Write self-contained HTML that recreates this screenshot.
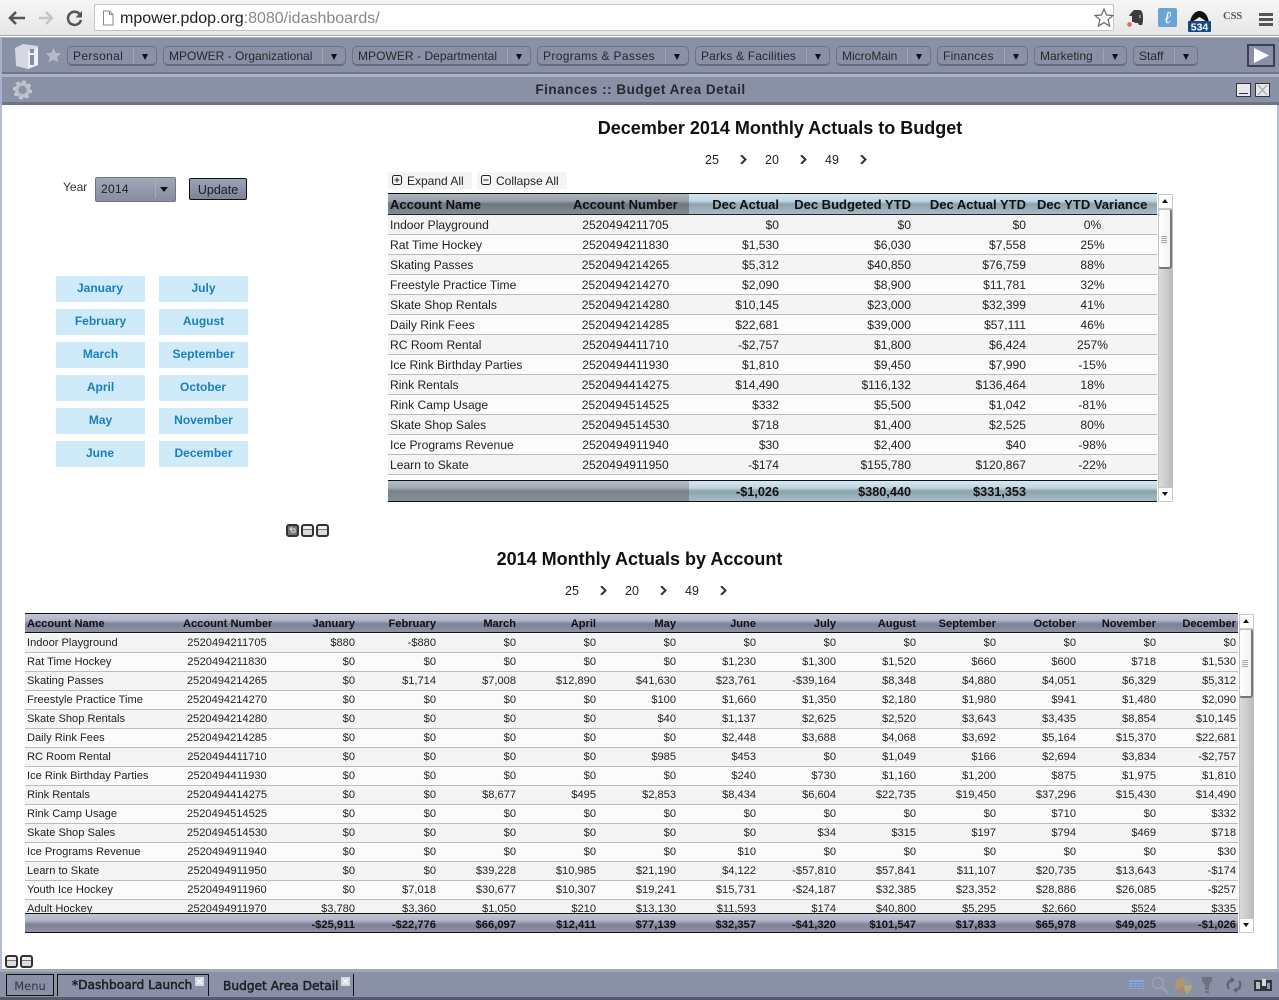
<!DOCTYPE html>
<html><head><meta charset="utf-8"><title>iDashboards</title>
<style>
*{box-sizing:border-box}
html,body{margin:0;padding:0}
body{width:1279px;height:1000px;position:relative;overflow:hidden;background:#fff;font-family:"Liberation Sans",Arial,sans-serif;color:#111}
.a{position:absolute}
.chrome{left:0;top:0;width:1279px;height:36px;background:linear-gradient(#f6f6f6,#e6e6e6);border-bottom:1px solid #a9a9a9}
.url{left:94px;top:4px;width:1020px;height:27px;background:#fff;border:1px solid #c4c4c4;border-radius:2px;font-size:16px;line-height:27px;padding-left:25px;color:#888}
.url b{font-weight:normal;color:#222}
.bar{background:#8a90a6}
.pill{position:absolute;top:46px;height:20px;border:1px solid #6d7284;border-bottom:2px solid #666b7c;border-radius:5px;font-size:12px;line-height:18px;padding-left:5px;color:#26282e;white-space:nowrap}
.pill i{position:absolute;right:22px;top:2px;width:1px;height:14px;background:#a3a8b4}
.pill u{position:absolute;right:8px;top:7px;width:0;height:0;border:3.5px solid transparent;border-top:6px solid #111;border-bottom:0}
.title{left:0;top:81px;width:1281px;text-align:center;font-size:13.5px;font-weight:bold;line-height:17px;color:#26282e;letter-spacing:.5px}
.h1{font-weight:bold;font-size:18px;line-height:22px;text-align:center;color:#111}
.pg{font-size:12.5px;line-height:14px;color:#222}
.ch{width:9px;height:9px}
table{border-collapse:separate;border-spacing:0;table-layout:fixed;position:absolute}
td{padding:0;white-space:nowrap;overflow:hidden;text-align:right}
td:first-child{text-align:left;padding-left:2px}
td:nth-child(2){text-align:center}
.t1{left:388px;top:215px;width:769px;font-size:12.1px;color:#222}
.t1 tr{height:20px}
.t1 td{height:20px;border-bottom:1px solid #bbb;padding-right:2px}
.t1 td:first-child{padding-right:0}
.t1 td:nth-child(2),.t1 td:nth-child(6){text-align:center;padding-right:0}
.t2{left:25px;top:633px;width:1213px;font-size:11.1px;color:#222}
.t2 tr{height:19px}
.t2 td{height:19px;border-bottom:1px solid #bbb;padding-right:2px}
.t2 td:nth-child(2){padding-right:0}
tr:nth-child(odd){background:#f4f4f4}
tr:nth-child(even){background:#fbfbfb}
.th{position:absolute;font-weight:bold;white-space:nowrap;color:#111}
.h1t{top:197px;font-size:13px;line-height:15px}
.h2t{top:618px;font-size:11.1px;line-height:13px}
.ft1{top:485px;font-size:12.7px;line-height:15px;font-weight:bold;color:#111}
.ft2{top:919px;font-size:11.2px;line-height:13px;font-weight:bold;color:#111}
.r{text-align:right}
.mon{position:absolute;width:89px;height:26px;background:#cfebf9;color:#1a7fbe;font-weight:bold;font-size:12px;line-height:24px;text-align:center}
.sb{background:linear-gradient(90deg,#dcdcdc,#bdbdbd);border:1px solid #c0c0c0}
.th-btn{background:#fff;border:1px solid #c8c8c8}
.thumb{background:linear-gradient(90deg,#fff,#f2f2f2);border:1px solid #c2c2c2;border-right:2px solid #777;border-bottom:2px solid #777;border-radius:3px}
.up{width:0;height:0;border:3.5px solid transparent;border-bottom:4px solid #111;border-top:0}
.dn{width:0;height:0;border:3.5px solid transparent;border-top:4px solid #111;border-bottom:0}
.sq{position:absolute;width:13px;height:13px;border:2px solid #333;border-radius:3px;background:linear-gradient(#eee 0,#eee 3px,#777 3px,#777 4px,#dcdcdc 4px)}
.tabt{position:absolute;font:12.2px/17px 'DejaVu Sans',sans-serif;-webkit-text-stroke:.5px #1e2026;color:#1e2026;white-space:nowrap}
</style></head><body>

<div class="a chrome"></div>
<svg class="a" style="left:8px;top:9px" width="75" height="18" viewBox="0 0 75 18"><path d="M2 9h15M8 3 2 9l6 6" fill="none" stroke="#555" stroke-width="2.600"/><path d="M31 9h13M38 3l6 6-6 6" fill="none" stroke="#c4c4c4" stroke-width="2.400"/><path d="M72 5.500A6.600 6.600 0 1 0 73 11" fill="none" stroke="#555" stroke-width="2.500"/><path d="M74 2v6.500h-6.500z" fill="#555"/></svg>
<div class="a url"><b>mpower.pdop.org</b>:8080/idashboards/</div>
<svg class="a" style="left:102px;top:10px" width="12" height="16" viewBox="0 0 12 16"><path d="M1.500 1h6l3.500 3.500V15h-9.500z M7.500 1v3.500H11" fill="#fff" stroke="#888"/></svg>
<svg class="a" style="left:1094px;top:8px" width="20" height="20" viewBox="0 0 20 20"><path d="m10 1 2.600 6 6.400.5-4.900 4.200 1.500 6.300L10 14.600 4.400 18l1.500-6.300L1 7.500 7.400 7z" fill="#fff" stroke="#666" stroke-width="1.200"/></svg>
<svg class="a" style="left:1126px;top:9px" width="18" height="19" viewBox="0 0 18 19"><path d="M5 4 8 1h5c3 0 4 3 4 7s0 6-1 8h-3l-1-2H9l-1-1H6V7H3z" fill="#3c3c3c"/><path d="M13 6h2v3h-2z" fill="#888"/><circle cx="3.500" cy="15.500" r="2.300" fill="#d9705d"/></svg>
<div class="a" style="left:1158px;top:8px;width:19px;height:19px;background:#6aa4d6;border-radius:2px;color:#fff;font:italic 17px/19px 'Liberation Serif',serif;text-align:center">ℓ</div>
<svg class="a" style="left:1187px;top:9px" width="26" height="23" viewBox="0 0 26 23"><path d="M3 14C4 5 9 2 12.500 2S21 5 22 14l-5-3-4.500-3L8 11z" fill="#111"/><rect x="1" y="12" width="23" height="11" rx="1" fill="#134a86"/><text x="12.500" y="21.500" font-family="Liberation Sans" font-size="10.500" font-weight="bold" fill="#fff" text-anchor="middle">534</text></svg>
<div class="a" style="left:1223px;top:10px;font:bold 10.5px/14px 'Liberation Serif',serif;color:#555">CSS</div>
<div class="a" style="left:1259px;top:13px;width:14px;height:3px;background:#555;box-shadow:0 5px 0 #555,0 10px 0 #555"></div>

<div class="a" style="left:0;top:37px;width:1279px;height:68px;background:#a9b1cd"></div>
<div class="a bar" style="left:2px;top:38px;width:1277px;height:36px;border-bottom:2px solid #6e7385"></div>
<div class="a bar" style="left:2px;top:77px;width:1277px;height:28px;border-bottom:3px solid #6e7385"></div>

<svg class="a" style="left:14px;top:42px" width="26" height="28" viewBox="0 0 26 28"><path d="M1 6 9 2l15 2v19l-10 4-12-3z" fill="#d4d8e2"/><path d="M14 9l10-3v17l-10 4z" fill="#eef0f4"/><rect x="16" y="13" width="4" height="10" fill="#868ca1"/><rect x="16" y="7" width="4" height="4" fill="#868ca1"/></svg>
<svg class="a" style="left:45px;top:47px" width="17" height="17" viewBox="0 0 20 20"><path d="m10 1 2.600 6 6.400.5-4.900 4.200 1.500 6.300L10 14.600 4.400 18l1.500-6.300L1 7.500 7.400 7z" fill="#b9bcc8"/></svg>

<div class="pill" style="left:67px;width:90px;letter-spacing:.35px">Personal<i></i><u></u></div>
<div class="pill" style="left:163px;width:183px">MPOWER - Organizational<i></i><u></u></div>
<div class="pill" style="left:352px;width:179px;letter-spacing:.05px">MPOWER - Departmental<i></i><u></u></div>
<div class="pill" style="left:537px;width:152px;letter-spacing:.35px">Programs &amp; Passes<i></i><u></u></div>
<div class="pill" style="left:695px;width:135px;letter-spacing:.17px">Parks &amp; Facilities<i></i><u></u></div>
<div class="pill" style="left:836px;width:95px">MicroMain<i></i><u></u></div>
<div class="pill" style="left:937px;width:91px;letter-spacing:.25px">Finances<i></i><u></u></div>
<div class="pill" style="left:1034px;width:93px">Marketing<i></i><u></u></div>
<div class="pill" style="left:1133px;width:65px">Staff<i></i><u></u></div>
<div class="a" style="left:1247px;top:44px;width:28px;height:23px;border:2px solid #3c4050;background:#8a90a6"></div>
<svg class="a" style="left:1253px;top:48px" width="17" height="15" viewBox="0 0 17 15"><path d="M1 0l15 7.500L1 15z" fill="#fff"/></svg>

<svg class="a" style="left:12px;top:80px" width="21" height="20" viewBox="0 0 23 22"><circle cx="11.500" cy="11" r="6.500" fill="none" stroke="#bdbfc6" stroke-width="4"/><circle cx="11.500" cy="11" r="9" fill="none" stroke="#c9cbd2" stroke-width="3" stroke-dasharray="3.500 3.500"/></svg>
<div class="a title">Finances :: Budget Area Detail</div>
<div class="a" style="left:1236px;top:83px;width:15px;height:14px;background:#e8e8ea;border:1px solid #333"><div class="a" style="left:2px;top:9px;width:9px;height:1px;background:#333"></div></div>
<div class="a" style="left:1255px;top:83px;width:15px;height:14px;background:#e8e8ea;border:1px solid #333"><svg class="a" style="left:1px;top:1px" width="11" height="10" viewBox="0 0 11 10"><path d="M1 0l9 10M10 0 1 10" stroke="#aaa" stroke-width="1.300"/></svg></div>

<div class="a" style="left:0;top:105px;width:2px;height:865px;background:#b3bcd9"></div>
<div class="a" style="left:1277px;top:105px;width:2px;height:865px;background:#b3bcd9"></div>

<div class="a h1" style="left:388px;top:117px;width:784px">December 2014 Monthly Actuals to Budget</div>
<div class="a pg" style="left:705px;top:153px">25</div>
<div class="a pg" style="left:765px;top:153px">20</div>
<div class="a pg" style="left:825px;top:153px">49</div>
<svg class="a ch" style="left:739px;top:155px" viewBox="0 0 9 9"><path d="m2 0 4.500 4.500L2 9" fill="none" stroke="#333" stroke-width="2"/></svg>
<svg class="a ch" style="left:799px;top:155px" viewBox="0 0 9 9"><path d="m2 0 4.500 4.500L2 9" fill="none" stroke="#333" stroke-width="2"/></svg>
<svg class="a ch" style="left:859px;top:155px" viewBox="0 0 9 9"><path d="m2 0 4.500 4.500L2 9" fill="none" stroke="#333" stroke-width="2"/></svg>

<div class="a" style="left:388px;top:172px;width:84px;height:17px;background:#f4f4f4"></div>
<div class="a" style="left:477px;top:172px;width:90px;height:17px;background:#f4f4f4"></div>
<svg class="a" style="left:392px;top:175px" width="10" height="10" viewBox="0 0 10 10"><rect x=".5" y=".5" width="9" height="9" rx="2" fill="none" stroke="#222"/><path d="M2.500 5h5M5 2.500v5" stroke="#222"/></svg>
<svg class="a" style="left:481px;top:175px" width="10" height="10" viewBox="0 0 10 10"><rect x=".5" y=".5" width="9" height="9" rx="2" fill="none" stroke="#222"/><path d="M2.500 5h5" stroke="#222"/></svg>
<div class="a" style="left:407px;top:174px;font-size:12px;line-height:15px;color:#222">Expand All</div>
<div class="a" style="left:496px;top:174px;font-size:12px;line-height:15px;color:#222">Collapse All</div>

<div class="a" style="left:388px;top:193px;width:301px;height:22px;border-top:1px solid #111;border-bottom:1px solid #222;background:linear-gradient(#adb4bd 0,#98a0a9 35%,#6e7780 50%,#838b94 100%)"></div>
<div class="a" style="left:689px;top:193px;width:468px;height:22px;border-top:1px solid #111;border-bottom:1px solid #222;background:linear-gradient(#d3e7f1 0,#bfd6e2 35%,#8da3ad 50%,#a5bcc7 100%)"></div>
<div class="th h1t" style="left:390px">Account Name</div>
<div class="th h1t" style="left:573px">Account Number</div>
<div class="th h1t r" style="left:689px;width:90px">Dec Actual</div>
<div class="th h1t r" style="left:781px;width:130px">Dec Budgeted YTD</div>
<div class="th h1t r" style="left:913px;width:113px">Dec Actual YTD</div>
<div class="th h1t" style="left:1037px">Dec YTD Variance</div>

<table class="t1"><colgroup><col style="width:174px"><col style="width:127px"><col style="width:92px"><col style="width:132px"><col style="width:115px"><col style="width:129px"></colgroup>
<tr><td>Indoor Playground</td><td>2520494211705</td><td>$0</td><td>$0</td><td>$0</td><td>0%</td></tr>
<tr><td>Rat Time Hockey</td><td>2520494211830</td><td>$1,530</td><td>$6,030</td><td>$7,558</td><td>25%</td></tr>
<tr><td>Skating Passes</td><td>2520494214265</td><td>$5,312</td><td>$40,850</td><td>$76,759</td><td>88%</td></tr>
<tr><td>Freestyle Practice Time</td><td>2520494214270</td><td>$2,090</td><td>$8,900</td><td>$11,781</td><td>32%</td></tr>
<tr><td>Skate Shop Rentals</td><td>2520494214280</td><td>$10,145</td><td>$23,000</td><td>$32,399</td><td>41%</td></tr>
<tr><td>Daily Rink Fees</td><td>2520494214285</td><td>$22,681</td><td>$39,000</td><td>$57,111</td><td>46%</td></tr>
<tr><td>RC Room Rental</td><td>2520494411710</td><td>-$2,757</td><td>$1,800</td><td>$6,424</td><td>257%</td></tr>
<tr><td>Ice Rink Birthday Parties</td><td>2520494411930</td><td>$1,810</td><td>$9,450</td><td>$7,990</td><td>-15%</td></tr>
<tr><td>Rink Rentals</td><td>2520494414275</td><td>$14,490</td><td>$116,132</td><td>$136,464</td><td>18%</td></tr>
<tr><td>Rink Camp Usage</td><td>2520494514525</td><td>$332</td><td>$5,500</td><td>$1,042</td><td>-81%</td></tr>
<tr><td>Skate Shop Sales</td><td>2520494514530</td><td>$718</td><td>$1,400</td><td>$2,525</td><td>80%</td></tr>
<tr><td>Ice Programs Revenue</td><td>2520494911940</td><td>$30</td><td>$2,400</td><td>$40</td><td>-98%</td></tr>
<tr><td>Learn to Skate</td><td>2520494911950</td><td>-$174</td><td>$155,780</td><td>$120,867</td><td>-22%</td></tr>
</table>

<div class="a" style="left:388px;top:480px;width:301px;height:22px;border-top:1px solid #111;border-bottom:1px solid #111;background:linear-gradient(#b5bcc5 0,#a0a8b1 35%,#78818a 50%,#87909a 100%)"></div>
<div class="a" style="left:689px;top:480px;width:468px;height:22px;border-top:1px solid #111;border-bottom:1px solid #111;background:linear-gradient(#d3e7f1 0,#bfd6e2 35%,#8da3ad 50%,#a5bcc7 100%)"></div>
<div class="a r ft1" style="left:689px;width:90px">-$1,026</div>
<div class="a r ft1" style="left:781px;width:130px">$380,440</div>
<div class="a r ft1" style="left:913px;width:113px">$331,353</div>

<div class="a sb" style="left:1158px;top:194px;width:15px;height:308px"></div>
<div class="a th-btn" style="left:1158px;top:194px;width:15px;height:15px"></div>
<div class="a up" style="left:1162px;top:199px"></div>
<div class="a thumb" style="left:1158px;top:209px;width:14px;height:60px"></div>
<div class="a" style="left:1161px;top:236px;width:6px;height:8px;background:repeating-linear-gradient(#aaa 0,#aaa 1px,#f5f5f5 1px,#f5f5f5 2px)"></div>
<div class="a th-btn" style="left:1158px;top:487px;width:15px;height:15px"></div>
<div class="a dn" style="left:1162px;top:492px"></div>

<div class="a" style="left:63px;top:180px;font-size:12px;line-height:15px;color:#333">Year</div>
<div class="a" style="left:95px;top:177px;width:81px;height:25px;border:1px solid #70767f;border-radius:2px;background:linear-gradient(#a3a8b8,#868ca2);font-size:12px;line-height:22px;padding-left:5px;color:#222;letter-spacing:.3px">2014<div class="a" style="left:59px;top:3px;width:1px;height:17px;background:#a7acb6"></div><div class="a dn" style="left:64px;top:9px;border-width:5px 4px 0"></div></div>
<div class="a" style="left:189px;top:178px;width:58px;height:22px;border:1px solid #111;border-radius:2px;background:linear-gradient(#9ea3b6,#7d8399);font-size:12.5px;line-height:22px;text-align:center;color:#1c1d22">Update</div>

<div class="mon" style="left:56px;top:276px;padding-right:1px">January</div><div class="mon" style="left:159px;top:276px">July</div>
<div class="mon" style="left:56px;top:309px">February</div><div class="mon" style="left:159px;top:309px">August</div>
<div class="mon" style="left:56px;top:342px">March</div><div class="mon" style="left:159px;top:342px">September</div>
<div class="mon" style="left:56px;top:375px">April</div><div class="mon" style="left:159px;top:375px;padding-right:1px">October</div>
<div class="mon" style="left:56px;top:408px">May</div><div class="mon" style="left:159px;top:408px">November</div>
<div class="mon" style="left:56px;top:441px;padding-right:1px">June</div><div class="mon" style="left:159px;top:441px">December</div>

<div class="sq" style="left:286px;top:524px;background:#777"></div>
<svg class="a" style="left:288px;top:526px" width="9" height="9" viewBox="0 0 9 9"><path d="M2 3h5v3H3M4 1 2 3l2 2" fill="none" stroke="#ddd"/></svg>
<div class="sq" style="left:301px;top:524px"></div>
<div class="sq" style="left:316px;top:524px"></div>

<div class="a h1" style="left:25px;top:548px;width:1229px">2014 Monthly Actuals by Account</div>
<div class="a pg" style="left:565px;top:584px">25</div>
<div class="a pg" style="left:625px;top:584px">20</div>
<div class="a pg" style="left:685px;top:584px">49</div>
<svg class="a ch" style="left:599px;top:586px" viewBox="0 0 9 9"><path d="m2 0 4.500 4.500L2 9" fill="none" stroke="#333" stroke-width="2"/></svg>
<svg class="a ch" style="left:659px;top:586px" viewBox="0 0 9 9"><path d="m2 0 4.500 4.500L2 9" fill="none" stroke="#333" stroke-width="2"/></svg>
<svg class="a ch" style="left:719px;top:586px" viewBox="0 0 9 9"><path d="m2 0 4.500 4.500L2 9" fill="none" stroke="#333" stroke-width="2"/></svg>

<div class="a" style="left:25px;top:613px;width:1213px;height:20px;border-top:1px solid #111;border-bottom:1px solid #111;background:linear-gradient(#c3c5d6 0,#b2b4c8 35%,#7f8296 55%,#8f92a6 100%)"></div>
<div class="th h2t" style="left:27px">Account Name</div>
<div class="th h2t" style="left:183px">Account Number</div>
<div class="th h2t r" style="left:277px;width:78px">January</div>
<div class="th h2t r" style="left:357px;width:79px">February</div>
<div class="th h2t r" style="left:437px;width:79px">March</div>
<div class="th h2t r" style="left:517px;width:79px">April</div>
<div class="th h2t r" style="left:597px;width:79px">May</div>
<div class="th h2t r" style="left:677px;width:79px">June</div>
<div class="th h2t r" style="left:757px;width:79px">July</div>
<div class="th h2t r" style="left:837px;width:79px">August</div>
<div class="th h2t r" style="left:917px;width:79px">September</div>
<div class="th h2t r" style="left:997px;width:79px">October</div>
<div class="th h2t r" style="left:1077px;width:79px">November</div>
<div class="th h2t r" style="left:1157px;width:79px">December</div>

<div class="a" style="left:25px;top:633px;width:1213px;height:281px;overflow:hidden">
<table class="t2" style="left:0;top:1px"><colgroup><col style="width:152px"><col style="width:100px"><col style="width:80px"><col style="width:81px"><col style="width:80px"><col style="width:80px"><col style="width:80px"><col style="width:80px"><col style="width:80px"><col style="width:80px"><col style="width:80px"><col style="width:80px"><col style="width:80px"><col style="width:80px"></colgroup>
<tr><td>Indoor Playground</td><td>2520494211705</td><td>$880</td><td>-$880</td><td>$0</td><td>$0</td><td>$0</td><td>$0</td><td>$0</td><td>$0</td><td>$0</td><td>$0</td><td>$0</td><td>$0</td></tr>
<tr><td>Rat Time Hockey</td><td>2520494211830</td><td>$0</td><td>$0</td><td>$0</td><td>$0</td><td>$0</td><td>$1,230</td><td>$1,300</td><td>$1,520</td><td>$660</td><td>$600</td><td>$718</td><td>$1,530</td></tr>
<tr><td>Skating Passes</td><td>2520494214265</td><td>$0</td><td>$1,714</td><td>$7,008</td><td>$12,890</td><td>$41,630</td><td>$23,761</td><td>-$39,164</td><td>$8,348</td><td>$4,880</td><td>$4,051</td><td>$6,329</td><td>$5,312</td></tr>
<tr><td>Freestyle Practice Time</td><td>2520494214270</td><td>$0</td><td>$0</td><td>$0</td><td>$0</td><td>$100</td><td>$1,660</td><td>$1,350</td><td>$2,180</td><td>$1,980</td><td>$941</td><td>$1,480</td><td>$2,090</td></tr>
<tr><td>Skate Shop Rentals</td><td>2520494214280</td><td>$0</td><td>$0</td><td>$0</td><td>$0</td><td>$40</td><td>$1,137</td><td>$2,625</td><td>$2,520</td><td>$3,643</td><td>$3,435</td><td>$8,854</td><td>$10,145</td></tr>
<tr><td>Daily Rink Fees</td><td>2520494214285</td><td>$0</td><td>$0</td><td>$0</td><td>$0</td><td>$0</td><td>$2,448</td><td>$3,688</td><td>$4,068</td><td>$3,692</td><td>$5,164</td><td>$15,370</td><td>$22,681</td></tr>
<tr><td>RC Room Rental</td><td>2520494411710</td><td>$0</td><td>$0</td><td>$0</td><td>$0</td><td>$985</td><td>$453</td><td>$0</td><td>$1,049</td><td>$166</td><td>$2,694</td><td>$3,834</td><td>-$2,757</td></tr>
<tr><td>Ice Rink Birthday Parties</td><td>2520494411930</td><td>$0</td><td>$0</td><td>$0</td><td>$0</td><td>$0</td><td>$240</td><td>$730</td><td>$1,160</td><td>$1,200</td><td>$875</td><td>$1,975</td><td>$1,810</td></tr>
<tr><td>Rink Rentals</td><td>2520494414275</td><td>$0</td><td>$0</td><td>$8,677</td><td>$495</td><td>$2,853</td><td>$8,434</td><td>$6,604</td><td>$22,735</td><td>$19,450</td><td>$37,296</td><td>$15,430</td><td>$14,490</td></tr>
<tr><td>Rink Camp Usage</td><td>2520494514525</td><td>$0</td><td>$0</td><td>$0</td><td>$0</td><td>$0</td><td>$0</td><td>$0</td><td>$0</td><td>$0</td><td>$710</td><td>$0</td><td>$332</td></tr>
<tr><td>Skate Shop Sales</td><td>2520494514530</td><td>$0</td><td>$0</td><td>$0</td><td>$0</td><td>$0</td><td>$0</td><td>$34</td><td>$315</td><td>$197</td><td>$794</td><td>$469</td><td>$718</td></tr>
<tr><td>Ice Programs Revenue</td><td>2520494911940</td><td>$0</td><td>$0</td><td>$0</td><td>$0</td><td>$0</td><td>$10</td><td>$0</td><td>$0</td><td>$0</td><td>$0</td><td>$0</td><td>$30</td></tr>
<tr><td>Learn to Skate</td><td>2520494911950</td><td>$0</td><td>$0</td><td>$39,228</td><td>$10,985</td><td>$21,190</td><td>$4,122</td><td>-$57,810</td><td>$57,841</td><td>$11,107</td><td>$20,735</td><td>$13,643</td><td>-$174</td></tr>
<tr><td>Youth Ice Hockey</td><td>2520494911960</td><td>$0</td><td>$7,018</td><td>$30,677</td><td>$10,307</td><td>$19,241</td><td>$15,731</td><td>-$24,187</td><td>$32,385</td><td>$23,352</td><td>$28,886</td><td>$26,085</td><td>-$257</td></tr>
<tr><td>Adult Hockey</td><td>2520494911970</td><td>$3,780</td><td>$3,360</td><td>$1,050</td><td>$210</td><td>$13,130</td><td>$11,593</td><td>$174</td><td>$40,800</td><td>$5,295</td><td>$2,660</td><td>$524</td><td>$335</td></tr>
</table></div>

<div class="a" style="left:25px;top:913px;width:1213px;height:20px;border-top:1px solid #111;border-bottom:1px solid #111;background:linear-gradient(#c3c5d6 0,#b2b4c8 35%,#7f8296 60%,#8f92a6 100%)"></div>
<div class="a r ft2" style="left:277px;width:78px">-$25,911</div>
<div class="a r ft2" style="left:357px;width:79px">-$22,776</div>
<div class="a r ft2" style="left:437px;width:79px">$66,097</div>
<div class="a r ft2" style="left:517px;width:79px">$12,411</div>
<div class="a r ft2" style="left:597px;width:79px">$77,139</div>
<div class="a r ft2" style="left:677px;width:79px">$32,357</div>
<div class="a r ft2" style="left:757px;width:79px">-$41,320</div>
<div class="a r ft2" style="left:837px;width:79px">$101,547</div>
<div class="a r ft2" style="left:917px;width:79px">$17,833</div>
<div class="a r ft2" style="left:997px;width:79px">$65,978</div>
<div class="a r ft2" style="left:1077px;width:79px">$49,025</div>
<div class="a r ft2" style="left:1157px;width:79px">-$1,026</div>

<div class="a sb" style="left:1239px;top:614px;width:15px;height:319px"></div>
<div class="a th-btn" style="left:1239px;top:614px;width:15px;height:15px"></div>
<div class="a up" style="left:1243px;top:619px"></div>
<div class="a thumb" style="left:1239px;top:629px;width:14px;height:69px"></div>
<div class="a" style="left:1242px;top:660px;width:6px;height:8px;background:repeating-linear-gradient(#aaa 0,#aaa 1px,#f5f5f5 1px,#f5f5f5 2px)"></div>
<div class="a th-btn" style="left:1239px;top:918px;width:15px;height:15px"></div>
<div class="a dn" style="left:1243px;top:923px"></div>

<div class="sq" style="left:5px;top:955px"></div>
<div class="sq" style="left:20px;top:955px"></div>

<div class="a" style="left:0;top:969px;width:1279px;height:31px;background:#8a90a6;border-top:3px solid #a3a7b4;border-bottom:3px solid #555a68"></div>
<div class="a" style="left:6px;top:974px;width:48px;height:22px;border:1px solid #111;font:11.5px/22px 'DejaVu Sans',sans-serif;text-align:center;color:#33353d">Menu</div>
<div class="a" style="left:57px;top:974px;width:152px;height:22px;border:1px solid #111;border-bottom:0;background:#8a90a6"></div>
<div class="a" style="left:353px;top:974px;width:1px;height:22px;background:#111"></div>
<div class="tabt" style="left:72px;top:977px">*Dashboard Launch</div>
<div class="tabt" style="left:223px;top:978px">Budget Area Detail</div>
<svg class="a" style="left:195px;top:977px" width="9" height="9" viewBox="0 0 9 9"><rect width="9" height="9" fill="#d7d9e0"/><path d="m2 2 5 5M7 2 2 7" stroke="#fff"/></svg>
<svg class="a" style="left:341px;top:977px" width="9" height="9" viewBox="0 0 9 9"><rect width="9" height="9" fill="#d7d9e0"/><path d="m2 2 5 5M7 2 2 7" stroke="#fff"/></svg>

<svg class="a" style="left:1129px;top:980px" width="15" height="9" viewBox="0 0 15 9"><rect width="15" height="9" fill="#8ea6d2"/><path d="M0 2.500h15M0 5h15M0 7.500h15M4 2v7M8 2v7M12 2v7" stroke="#6f88bb" stroke-width=".7"/></svg>
<svg class="a" style="left:1151px;top:976px" width="18" height="18" viewBox="0 0 18 18"><circle cx="7" cy="7" r="5.500" fill="none" stroke="#9da1b1" stroke-width="1.500"/><path d="m11 11 6 6" stroke="#9da1b1" stroke-width="2"/></svg>
<svg class="a" style="left:1175px;top:977px" width="17" height="17" viewBox="0 0 17 17"><path d="M8.500 8.500V0a8.500 8.500 0 0 1 8.500 8.500z" fill="#8f9aa0"/><path d="M8.500 8.500H17A8.500 8.500 0 0 1 11 16.600z" fill="#a9b077"/><path d="M8.500 8.500 11 16.600A8.500 8.500 0 0 1 1 12.500z" fill="#a6887e"/><path d="M8.500 8.500 1 12.500A8.500 8.500 0 0 1 8.500 0z" fill="#b49470"/></svg>
<svg class="a" style="left:1202px;top:977px" width="10" height="16" viewBox="0 0 10 16"><path d="M0 0h10v4L7 8v5H3V8L0 4zM3 14h4v2H3z" fill="#6f7381"/></svg>
<svg class="a" style="left:1226px;top:977px" width="16" height="16" viewBox="0 0 16 16"><path d="M3 12A5.500 5.500 0 0 1 6 3M13 4a5.500 5.500 0 0 1-3 9" fill="none" stroke="#5f6370" stroke-width="2.200"/><path d="M5 0v6L9 3zM11 10v6l-4-3z" fill="#5f6370"/></svg>
<svg class="a" style="left:1254px;top:978px" width="18" height="13" viewBox="0 0 18 13"><rect y="2" width="18" height="11" fill="#33353c"/><rect x="2" y="4" width="4" height="7" fill="#b9bcc6"/><rect x="8" y="1" width="4" height="7" fill="#d6d8de"/><rect x="13" y="5" width="3" height="6" fill="#9a9da8"/></svg>
</body></html>
